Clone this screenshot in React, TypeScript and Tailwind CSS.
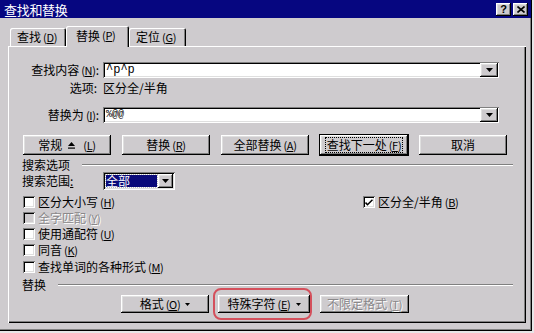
import React from "react";

const raised =
  "shadow-[inset_-1px_-1px_0_0_#000,inset_1px_1px_0_0_#fff,inset_-2px_-2px_0_0_#808080,inset_2px_2px_0_0_#dfdfdf]";
const sunken =
  "shadow-[inset_1px_1px_0_0_#808080,inset_-1px_-1px_0_0_#fff,inset_2px_2px_0_0_#000,inset_-2px_-2px_0_0_#dfdfdf]";

function M({ c }: { c: string }) {
  return (
    <span className="ml-[2px] text-[11px] tracking-[-0.3px]">
      (<span className="underline underline-offset-[1px]">{c}</span>)
    </span>
  );
}

function Arrow() {
  return (
    <svg width="7" height="4" viewBox="0 0 7 4">
      <path d="M0 0h7L3.5 4z" fill="#000" />
    </svg>
  );
}

function DropBtn({ w = 18, h = 14 }: { w?: number; h?: number }) {
  return (
    <div
      className={"flex items-center justify-center bg-[#cecbce] " + raised}
      style={{ width: w, height: h }}
    >
      <Arrow />
    </div>
  );
}

function Combo({ text, small }: { text: string; small?: boolean }) {
  return (
    <div className={"w-[396px] h-[16px] bg-white flex items-center pl-[3px] pr-[1px] " + sunken}>
      <span
        className={
          "flex-1 font-['Liberation_Mono',monospace] leading-none " +
          (small ? "text-[10px]" : "text-[12px]")
        }
      >
        {text}
      </span>
      <DropBtn w={18} h={14} />
    </div>
  );
}

function Btn({
  children,
  w = 88,
  h = 20,
  def,
  disabled,
}: {
  children: React.ReactNode;
  w?: number;
  h?: number;
  def?: boolean;
  disabled?: boolean;
}) {
  return (
    <div
      className={
        "flex items-center justify-center bg-[#cecbce] " +
        raised +
        (def ? " outline outline-1 outline-black" : "") +
        (disabled ? " text-[#8a888a] [text-shadow:1px_1px_0_#fff]" : "")
      }
      style={{ width: w, height: h }}
    >
      {children}
    </div>
  );
}

function Check({ checked, disabled }: { checked?: boolean; disabled?: boolean }) {
  return (
    <div
      className={
        "w-[12px] h-[12px] flex items-center justify-center " +
        (disabled ? "bg-[#cecbce] " : "bg-white ") +
        sunken
      }
    >
      {checked && (
        <svg width="8" height="7" viewBox="0 0 8 7">
          <path d="M0.5 3.5l2 2.2 5-5" stroke="#000" strokeWidth="1.6" fill="none" />
        </svg>
      )}
    </div>
  );
}

function CheckRow({
  label,
  m,
  checked,
  disabled,
}: {
  label: string;
  m: string;
  checked?: boolean;
  disabled?: boolean;
}) {
  return (
    <div className="flex items-center h-[16px]">
      <div className="ml-[1px]">
        <Check checked={checked} disabled={disabled} />
      </div>
      <span
        className={
          "ml-[3px] " + (disabled ? "text-[#8a888a] [text-shadow:1px_1px_0_#fff]" : "")
        }
      >
        {label}
        <M c={m} />
      </span>
    </div>
  );
}

function GroupLine() {
  return <div className="flex-1 h-[2px] border-t border-t-[#808080] border-b border-b-white" />;
}

export default function App() {
  return (
    <div className="w-[534px] h-[333px] bg-[#e8e6e8] overflow-hidden font-['Noto_Sans_CJK_SC',sans-serif] text-[12px] leading-none text-black">
      <div className="w-[532px] h-[331px] bg-[#cecbce] shadow-[inset_-1px_-1px_0_0_#000,inset_-2px_-2px_0_0_#808080] flex flex-col">
        {/* title bar */}
        <div className="h-[18px] w-[531px] bg-[#060680] flex items-center pl-[4px] pr-[3px]">
          <span className="text-white text-[13px] flex-1 tracking-[-0.3px]">查找和替换</span>
          <div
            className={
              "w-[15px] h-[13px] bg-[#cecbce] flex items-center justify-center text-[11px] font-bold font-['Liberation_Sans',sans-serif] " +
              raised
            }
          >
            ?
          </div>
          <div
            className={
              "ml-[2px] w-[15px] h-[13px] bg-[#cecbce] flex items-center justify-center " + raised
            }
          >
            <svg width="8" height="7" viewBox="0 0 8 7">
              <path d="M0.5 0.5l7 6M7.5 0.5l-7 6" stroke="#000" strokeWidth="1.6" />
            </svg>
          </div>
        </div>

        {/* tabs */}
        <div className="mt-[8px] h-[21px] flex items-end pl-[10px] relative z-10">
          <div className="w-[56px] h-[18px] mb-[1px] rounded-t-[2px] shadow-[inset_1px_1px_0_0_#fff,inset_-1px_0_0_0_#000,inset_-2px_0_0_0_#808080] flex items-center pl-[7px]">
            查找<M c="D" />
          </div>
          <div className="w-[63px] h-[21px] bg-[#cecbce] rounded-t-[2px] shadow-[inset_1px_1px_0_0_#fff,inset_-1px_0_0_0_#000,inset_-2px_0_0_0_#808080] flex items-center pl-[10px] pb-[2px]">
            替换<M c="P" />
          </div>
          <div className="w-[57px] h-[18px] mb-[1px] rounded-t-[2px] shadow-[inset_1px_1px_0_0_#fff,inset_-1px_0_0_0_#000,inset_-2px_0_0_0_#808080] flex items-center pl-[7px]">
            定位<M c="G" />
          </div>
        </div>

        {/* panel */}
        <div className="-mt-[1px] ml-[8px] w-[518px] h-[277px] shadow-[inset_1px_1px_0_0_#fff,inset_-1px_-1px_0_0_#000,inset_-2px_-2px_0_0_#808080] pl-[14px] pt-[16px] flex flex-col">
          <div className="flex items-center h-[16px]">
            <div className="w-[77px] text-right">
              查找内容<M c="N" />:
            </div>
            <div className="ml-[4px]">
              <Combo text="^p^p" />
            </div>
          </div>
          <div className="flex items-center h-[16px] mt-[2px]">
            <div className="w-[77px] text-right pr-[2px]">选项:</div>
            <div className="ml-[4px]">区分全/半角</div>
          </div>
          <div className="flex items-center h-[16px] mt-[11px]">
            <div className="w-[77px] text-right">
              替换为<M c="I" />:
            </div>
            <div className="ml-[4px]">
              <Combo text="%@@" small />
            </div>
          </div>

          <div className="flex items-center h-[20px] mt-[12px] ml-[1px] gap-[11px]">
            <Btn>
              <span>常规</span>
              <svg width="7" height="7" viewBox="0 0 7 7" className="mx-[6px]">
                <path d="M3.5 0L7 4H0z" fill="#000" />
                <rect x="0" y="5.5" width="7" height="1.2" fill="#000" />
              </svg>
              <M c="L" />
            </Btn>
            <Btn>
              替换<M c="R" />
            </Btn>
            <Btn>
              全部替换<M c="A" />
            </Btn>
            <Btn def>
              <span className="outline outline-1 outline-dotted outline-black px-[1px] py-[1px]">
                查找下一处<M c="F" />
              </span>
            </Btn>
            <Btn>取消</Btn>
          </div>

          <div className="flex items-center h-[14px] mt-[3px] w-[491px]">
            <span>搜索选项</span>
            <div className="ml-[12px] flex-1 flex">
              <GroupLine />
            </div>
          </div>

          <div className="flex items-center h-[18px]">
            <div className="w-[81px]">
              搜索范围<span className="underline">:</span>
            </div>
            <div className={"w-[72px] h-[18px] bg-white flex items-center pl-[3px] pr-[2px] " + sunken}>
              <div className="w-[51px] h-[12px] bg-[#0a0a7a] text-white flex items-center outline outline-1 outline-dotted outline-[#bbb]">
                全部
              </div>
              <div className="ml-auto">
                <DropBtn w={15} h={14} />
              </div>
            </div>
          </div>

          <div className="mt-[4px] flex items-center h-[16px]">
            <div className="w-[340px]">
              <CheckRow label="区分大小写" m="H" />
            </div>
            <CheckRow label="区分全/半角" m="B" checked />
          </div>
          <CheckRow label="全字匹配" m="Y" disabled />
          <CheckRow label="使用通配符" m="U" />
          <CheckRow label="同音" m="K" />
          <div className="mt-[1px]">
            <CheckRow label="查找单词的各种形式" m="M" />
          </div>

          <div className="flex items-center h-[14px] mt-[3px] w-[491px]">
            <span>替换</span>
            <div className="ml-[12px] flex-1 flex">
              <GroupLine />
            </div>
          </div>

          <div className="flex items-center h-[18px] mt-[3px] ml-[99px]">
            <Btn w={88} h={18}>
              格式<M c="O" />
              <span className="ml-[5px]">
                <svg width="5" height="3" viewBox="0 0 5 3">
                  <path d="M0 0h5L2.5 3z" fill="#000" />
                </svg>
              </span>
            </Btn>
            <div className="relative ml-[9px]">
              <Btn w={92} h={18}>
                特殊字符<M c="E" />
                <span className="ml-[5px]">
                  <svg width="5" height="3" viewBox="0 0 5 3">
                    <path d="M0 0h5L2.5 3z" fill="#000" />
                  </svg>
                </span>
              </Btn>
              <div className="absolute left-[-5px] right-[-2px] top-[-7px] bottom-[-7px] border-2 border-[#d4505c] rounded-[8px]" />
            </div>
            <div className="ml-[10px]">
              <Btn w={89} h={18} disabled>
                不限定格式<M c="T" />
              </Btn>
            </div>
          </div>
        </div>
      </div>
    </div>
  );
}
